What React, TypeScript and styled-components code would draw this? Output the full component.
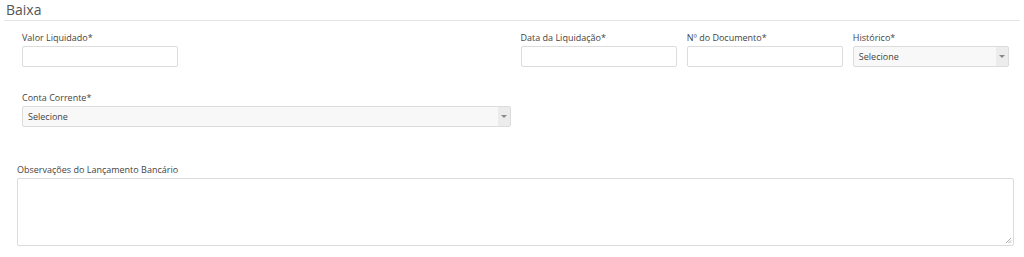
import React from 'react'
import styled, { createGlobalStyle } from 'styled-components'

const GlobalStyle = createGlobalStyle`
    html, body {
        margin: 0;
        padding: 0;
        background: #ffffff;
        font-family: "Open Sans", "Liberation Sans", sans-serif;
        color: #555555;
    }
`

const Page = styled.div`
    width: 1024px;
    height: 257px;
    box-sizing: border-box;
    padding: 2px 4px 0 4px;
`

const Title = styled.h3`
    margin: 0;
    padding: 0 0 2px 2px;
    font-size: 14px;
    font-weight: 400;
    line-height: 16px;
    color: #555555;
    border-bottom: 1px solid #e5e5e5;
`

const Form = styled.div`
    margin: 0 6px 0 13px;
`

const Row = styled.div<{ $top: number }>`
    display: grid;
    grid-template-columns: repeat(6, 1fr);
    margin-top: ${p => p.$top}px;
`

const Field = styled.div<{ $span?: number; $start?: number; $flush?: boolean }>`
    grid-column: ${p => (p.$start ? `${p.$start} / ` : '')}span ${p => p.$span || 1};
    padding: 0 ${p => (p.$flush ? 0 : 5)}px;
    display: flex;
    flex-direction: column;
`

const Label = styled.label`
    font-size: 9px;
    line-height: 12px;
    color: #444444;
    margin-bottom: 2px;
`

const Input = styled.div`
    height: 21px;
    box-sizing: border-box;
    border: 1px solid #dcdcdc;
    border-radius: 2px;
    background: #ffffff;
`

const Select = styled.div`
    height: 21px;
    box-sizing: border-box;
    border: 1px solid #dcdcdc;
    border-radius: 2px;
    background: #f8f8f8;
    display: flex;
    align-items: stretch;
    font-size: 9px;
    color: #444444;
`

const SelectText = styled.span`
    flex: 1;
    display: flex;
    align-items: center;
    padding-left: 5px;
`

const Arrow = styled.span`
    width: 12px;
    background: #ececec;
    display: flex;
    align-items: center;
    justify-content: center;

    &::after {
        content: '';
        border-left: 3px solid transparent;
        border-right: 3px solid transparent;
        border-top: 3px solid #888888;
    }
`

const TextArea = styled.div`
    position: relative;
    height: 68px;
    box-sizing: border-box;
    border: 1px solid #dcdcdc;
    border-radius: 2px;
    background: #ffffff;
`

const Grip = styled.svg`
    position: absolute;
    right: 1px;
    bottom: 1px;
`

const App: React.FunctionComponent = () => {
    return (
        <>
            <GlobalStyle />
            <Page>
                <Title>Baixa</Title>
                <Form>
                    <Row $top={11}>
                        <Field>
                            <Label>Valor Liquidado*</Label>
                            <Input />
                        </Field>
                        <Field $start={4}>
                            <Label>Data da Liquidação*</Label>
                            <Input />
                        </Field>
                        <Field>
                            <Label>Nº do Documento*</Label>
                            <Input />
                        </Field>
                        <Field>
                            <Label>Histórico*</Label>
                            <Select>
                                <SelectText>Selecione</SelectText>
                                <Arrow />
                            </Select>
                        </Field>
                    </Row>
                    <Row $top={25}>
                        <Field $span={3}>
                            <Label>Conta Corrente*</Label>
                            <Select>
                                <SelectText>Selecione</SelectText>
                                <Arrow />
                            </Select>
                        </Field>
                    </Row>
                    <Row $top={37}>
                        <Field $span={6} $flush>
                            <Label>Observações do Lançamento Bancário</Label>
                            <TextArea>
                                <Grip width="7" height="7" viewBox="0 0 7 7">
                                    <path d="M6 1 L1 6 M6 3.5 L3.5 6 M6 5.5 L5.5 6" stroke="#999" strokeWidth="0.8" />
                                </Grip>
                            </TextArea>
                        </Field>
                    </Row>
                </Form>
            </Page>
        </>
    )
}

export default App
